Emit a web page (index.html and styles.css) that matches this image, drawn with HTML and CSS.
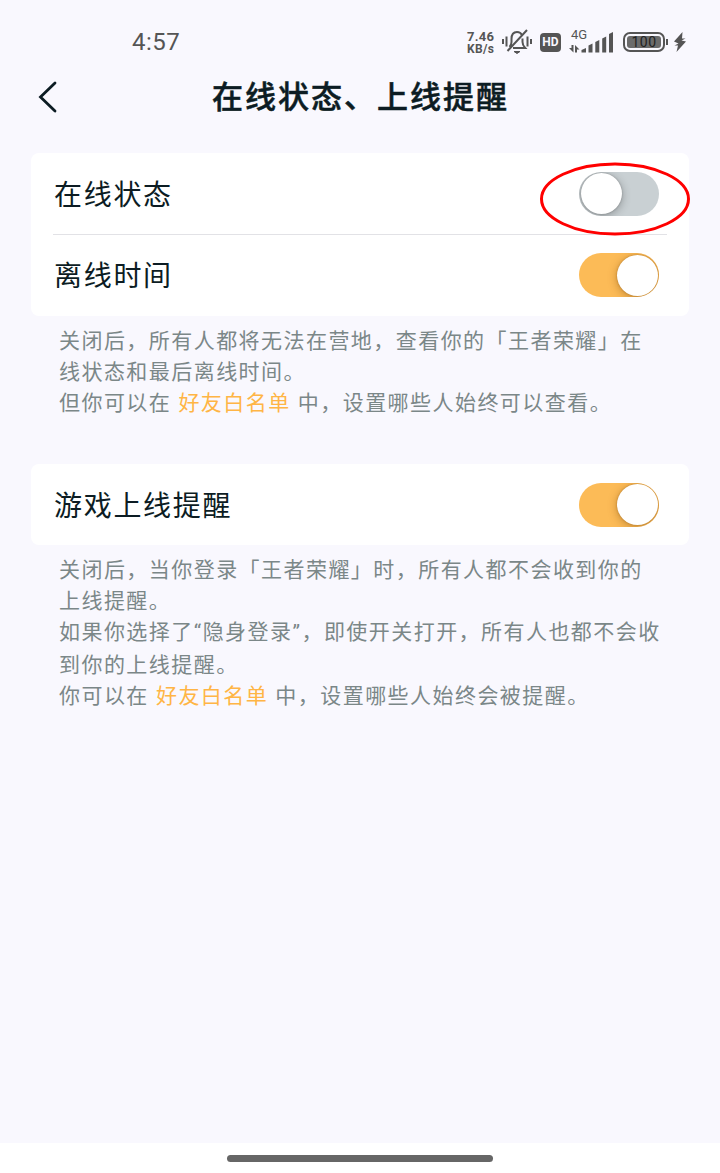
FILE: index.html
```
<!DOCTYPE html>
<html lang="zh-CN">
<head>
    <meta charset="UTF-8">
    <meta name="viewport" content="width=device-width, initial-scale=1.0">
    <title>在线状态、上线提醒</title>
    <link rel="stylesheet" href="styles.css">
</head>
<body>

    <div class="screen">
        <!-- Status bar -->
        <div class="status-bar">
            <span class="time">4:57</span>
            <div class="status-icons">
                <div class="net-speed"><span>7.46</span><span>KB/s</span></div>
                <svg class="icon-mute" width="30" height="28" viewBox="0 0 30 28" fill="none" stroke="#555" stroke-width="2">
                    <path d="M1 11v5M4.500 8.500v10M25.500 8.500v10M29 11v5"/>
                    <path d="M7.500 19c1.500-1.500 2-3 2-5v-3c0-4.500 2-7 5.500-7 2.300 0 4 1 4.800 3M20.500 10.500v3.500c0 2.500.8 4 2.700 6H11M25 2L5.500 23"/>
                    <path d="M12 23.500h6l-3 2z" fill="#555" stroke-width="1"/>
                </svg>
                <span class="hd">HD</span>
                <div class="signal">
                    <span class="net-type">4G</span>
                    <svg width="45" height="22" viewBox="0 0 45 22" fill="#555">
                        <path d="M2.500 14h2v7.500L0 17h2.500zM6 21.500V14l4.500 4.500H8v3z"/>
                        <path d="M12.500 21.500v-2.500l4.500-2v4.500zM19.500 14.500l4-2v9h-4zM26.300 11l4-2v12.500h-4zM33.200 7.500l4-2v16h-4zM40 3l4-2v20.500h-4z"/>
                    </svg>
                </div>
                <div class="battery"><span>100</span></div>
                <svg class="bolt" width="12" height="20" viewBox="0 0 12 20" fill="#555">
                    <path d="M8.500 0L0 9.500 4.500 11.500 0.500 13.500h3.500L2.500 20 12 9.500 7.500 8.500 11.500 6.500H8z"/>
                </svg>
            </div>
        </div>

        <!-- Title -->
        <header class="header">
            <svg class="back" width="20" height="32" viewBox="0 0 20 32" fill="none" stroke="#0c1c23" stroke-width="2.800" stroke-linecap="round" stroke-linejoin="miter">
                <path d="M18 2L3.500 16l14.500 14"/>
            </svg>
            <h1>在线状态、上线提醒</h1>
        </header>

        <main class="content">
            <div class="card">
                <div class="row">
                    <span class="label">在线状态</span>
                    <span class="toggle"></span>
                    <svg class="mark" width="152" height="74" viewBox="0 0 152 74">
                        <ellipse cx="76" cy="37" rx="73.500" ry="35" fill="none" stroke="#f00" stroke-width="3"/>
                    </svg>
                </div>
                <div class="row">
                    <span class="label">离线时间</span>
                    <span class="toggle on"></span>
                </div>
            </div>
            <div class="desc">
                <p>关闭后，所有人都将无法在营地，查看你的「王者荣耀」在<br>线状态和最后离线时间。</p>
                <p>但你可以在 <a>好友白名单</a> 中，设置哪些人始终可以查看。</p>
            </div>

            <div class="card">
                <div class="row">
                    <span class="label">游戏上线提醒</span>
                    <span class="toggle on"></span>
                </div>
            </div>
            <div class="desc">
                <p>关闭后，当你登录「王者荣耀」时，所有人都不会收到你的<br>上线提醒。</p>
                <p>如果你选择了<span class="quote">“</span>隐身登录<span class="quote">”</span>，即使开关打开，所有人也都不会收<br>到你的上线提醒。</p>
                <p>你可以在 <a>好友白名单</a> 中，设置哪些人始终会被提醒。</p>
            </div>
        </main>

        <div class="nav-bar"><span class="handle"></span></div>
    </div>

</body>
</html>
```
FILE: styles.css
```
* {
    box-sizing: border-box;
}

body {
    margin: 0;
    background: #f9f8fe;
    font-family: Roboto, "Noto Sans CJK SC", sans-serif;
    color: #0c1c23;
}

.screen {
    display: flex;
    flex-direction: column;
    height: 1173px;
}

/* Status bar */
.status-bar {
    display: flex;
    justify-content: space-between;
    align-items: center;
    height: 64px;
    padding: 20px 34px 0 132px;
    color: #555;
}

.time {
    font-size: 24px;
    line-height: 44px;
    letter-spacing: 0.5px;
}

.status-icons {
    display: flex;
    align-items: center;
    height: 44px;
}

.net-speed {
    display: flex;
    flex-direction: column;
    width: 29px;
    margin-right: 6px;
    padding-top: 2px;
    font-size: 12px;
    font-weight: 700;
    line-height: 12px;
    letter-spacing: 0.3px;
    white-space: nowrap;
}

.net-speed span:first-child {
    font-size: 13px;
}

.hd {
    width: 21px;
    height: 19px;
    margin: 0 8px 0 8px;
    border-radius: 4px;
    background: #555;
    color: #f9f8fe;
    font-size: 12px;
    font-weight: 700;
    line-height: 19px;
    text-align: center;
}

.signal {
    position: relative;
    height: 22px;
    margin-right: 9px;
}

.signal svg {
    display: block;
}

.net-type {
    position: absolute;
    top: -3px;
    left: 2px;
    font-size: 13px;
    line-height: 14px;
}

.battery {
    position: relative;
    width: 42px;
    height: 20px;
    margin-right: 9px;
    padding: 2px;
    border: 2px solid #555;
    border-radius: 7px;
}

.battery::after {
    content: "";
    position: absolute;
    top: 5px;
    right: -5px;
    width: 2px;
    height: 6px;
    background: #555;
}

.battery span {
    display: block;
    height: 12px;
    border-radius: 3px;
    background: #6b6b6b;
    color: #222;
    font-size: 14px;
    line-height: 12px;
    letter-spacing: 0.5px;
    text-align: center;
}

/* Title */
.header {
    display: grid;
    grid-template-columns: 60px 1fr 60px;
    align-items: center;
    height: 66px;
    padding: 0 37px;
}

h1 {
    margin: 0;
    padding: 1px 0 0 1px;
    font-size: 31px;
    font-weight: 500;
    line-height: 40px;
    letter-spacing: 2px;
    text-align: center;
    white-space: nowrap;
    -webkit-text-stroke: 0.5px #0c1c23;
}

/* Cards */
.content {
    flex: 1;
    padding: 23px 31px 0;
}

.card {
    border-radius: 8px;
    background: #fff;
}

.row {
    position: relative;
    display: flex;
    justify-content: space-between;
    align-items: center;
    height: 81px;
    padding: 0 30px 0 23px;
}

.row + .row {
    height: 82px;
}

.row + .row::before {
    content: "";
    position: absolute;
    top: 0;
    left: 22px;
    right: 22px;
    height: 1px;
    background: #e2e2e6;
}

.label {
    padding-top: 4px;
    font-size: 28px;
    line-height: 40px;
    letter-spacing: 1.700px;
}

.toggle {
    display: flex;
    width: 80px;
    height: 44px;
    padding: 1.500px;
    border-radius: 22px;
    background: #c9d0d3;
    overflow: hidden;
}

.toggle::before {
    content: "";
    width: 41px;
    height: 41px;
    border-radius: 50%;
    background: #fff;
    box-shadow: 0 2px 10px rgba(0, 0, 0, 0.3), 0 0 2px rgba(0, 0, 0, 0.25);
}

.toggle.on {
    justify-content: flex-end;
    background: #fcbb57;
}

.toggle.on::before {
    box-shadow: 0 2px 10px rgba(110, 60, 0, 0.4), 0 0 2px rgba(140, 80, 0, 0.5);
}

.mark {
    position: absolute;
    top: 9px;
    right: -2px;
    z-index: 1;
}

.desc {
    height: 148px;
    padding: 8px 0 0 28px;
    color: #7b8788;
    font-family: "Noto Sans CJK SC", sans-serif;
    font-size: 21px;
    line-height: 31px;
    letter-spacing: 1.450px;
    word-spacing: 1px;
    white-space: nowrap;
}

.desc p {
    margin: 0;
}

.desc a {
    color: #ffb545;
}

.quote {
    font-family: Roboto, sans-serif;
    letter-spacing: 1.500px;
}

/* Gesture bar */
.nav-bar {
    display: flex;
    justify-content: center;
    height: 30px;
    padding-top: 12px;
    background: #fff;
}

.handle {
    width: 266px;
    height: 7px;
    border-radius: 4px;
    background: #666;
}
```
